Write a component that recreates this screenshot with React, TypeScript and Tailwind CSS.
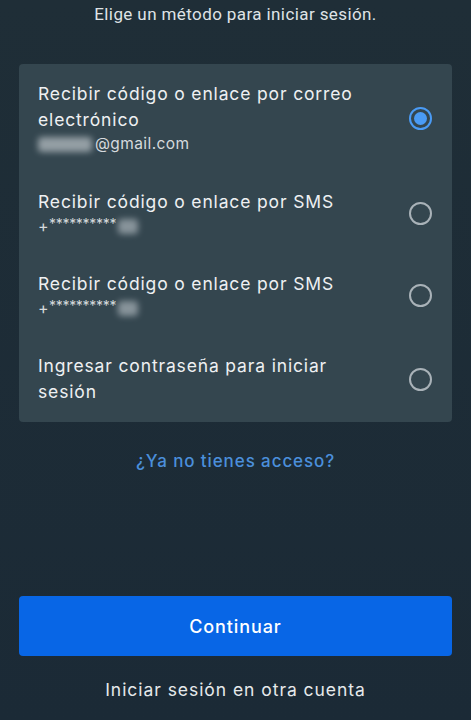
import React from "react";

const Radio = ({ checked }: { checked?: boolean }) =>
  checked ? (
    <div className="w-[23px] h-[23px] rounded-full border-2 border-[#4a9bf5] flex items-center justify-center shrink-0">
      <div className="w-[13px] h-[13px] rounded-full bg-[#4a9bf5]" />
    </div>
  ) : (
    <div className="w-[23px] h-[23px] rounded-full border-2 border-[#a9b2b8] shrink-0" />
  );

const Row = ({
  title,
  sub,
  checked,
}: {
  title: React.ReactNode;
  sub?: React.ReactNode;
  checked?: boolean;
}) => (
  <div className="flex items-center pl-[19px] pr-[19px] py-[17px]">
    <div className="flex-1 min-w-0 pr-2">
      <div className="text-[17.5px] leading-[26px] text-[#eef0f2] tracking-[0.85px]">{title}</div>
      {sub && <div className="text-[15.5px] leading-[22px] text-[#d6dadd] tracking-[0.4px]">{sub}</div>}
    </div>
    <div className="mr-[1px]">
      <Radio checked={checked} />
    </div>
  </div>
);

const Phone = () => (
  <span className="flex items-center">
    <span className="text-[16px] leading-[22px]">+</span>
    <span className="text-[14px] leading-[22px] -translate-y-[2px] tracking-[-0.3px]">**********</span>
    <span className="ml-[2px] inline-block w-[20px] h-[15px] rounded bg-[#a4aeb4] blur-[3px] opacity-75" />
  </span>
);

export default function App() {
  return (
    <div
      className="w-full h-[720px] overflow-hidden bg-gradient-to-b from-[#1f2e37] to-[#1b2a36] flex flex-col"
      style={{ fontFamily: "Inter, 'Noto Sans', sans-serif" }}
    >
      <div
        className="pt-[4px] text-center text-[17px] leading-[20px] tracking-[0.4px] text-[#dfe3e6]"
        style={{ fontFamily: "Roboto, sans-serif" }}
      >
        Elige un método para iniciar sesión.
      </div>
      <div className="mx-[19px] mt-[40px] rounded-[4px] bg-[#34464f]">
        <Row
          title={<>Recibir código o enlace por correo<br />electrónico</>}
          sub={
            <span className="flex items-center">
              <span className="inline-block w-[54px] h-[15px] rounded bg-[#b4bcc1] blur-[3px] opacity-75 mr-[3px]" />
              @gmail.com
            </span>
          }
          checked
        />
        <Row title="Recibir código o enlace por SMS" sub={<Phone />} />
        <Row title="Recibir código o enlace por SMS" sub={<Phone />} />
        <Row title={<>Ingresar contraseña para iniciar<br />sesión</>} />
      </div>
      <div className="mt-[28px] text-center text-[17px] leading-[22px] tracking-[0.9px] font-medium text-[#4b8fdb]">
        ¿Ya no tienes acceso?
      </div>
      <div className="mt-[124px] mx-[19px] h-[60px] rounded-[4px] bg-[#0866e6] flex items-center justify-center text-[18px] tracking-[0.9px] font-medium text-white">
        Continuar
      </div>
      <div className="mt-[22px] text-center text-[17.5px] leading-[24px] tracking-[0.95px] text-[#e6e9eb]">
        Iniciar sesión en otra cuenta
      </div>
    </div>
  );
}
